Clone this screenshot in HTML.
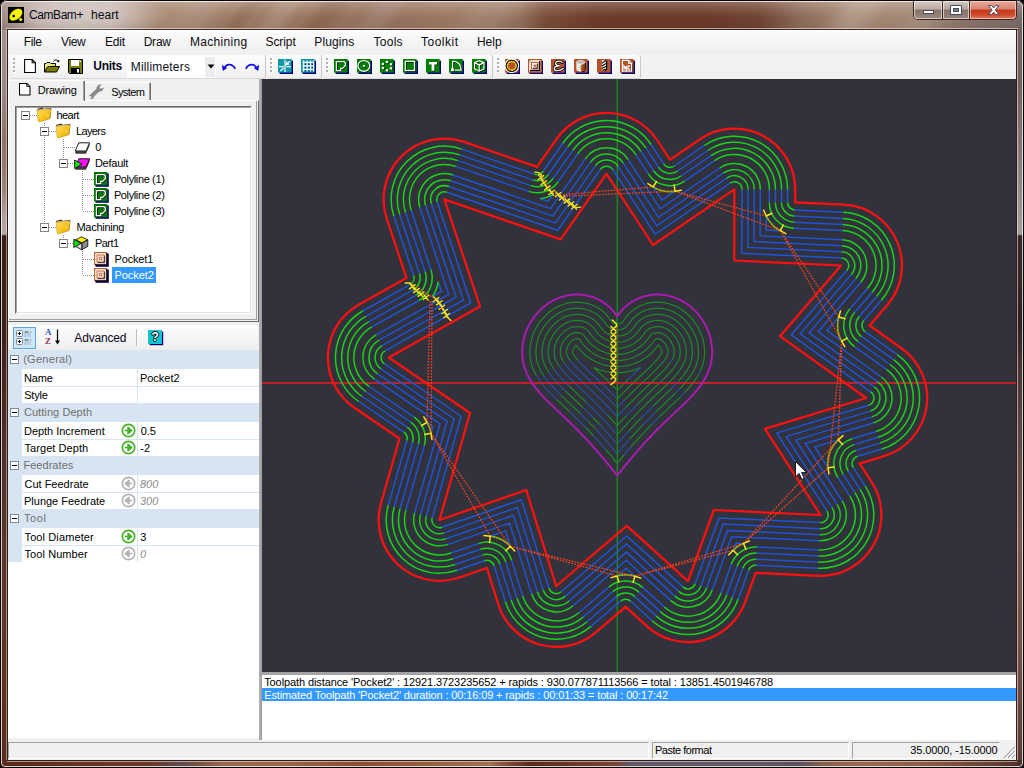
<!DOCTYPE html>
<html lang="en"><head><meta charset="utf-8"><title>CamBam+ heart</title><style>
html,body{margin:0;padding:0}
body{width:1024px;height:768px;overflow:hidden;position:relative;background:#000;font-family:"Liberation Sans",sans-serif;font-size:11px}
div,span,svg{position:absolute;box-sizing:border-box}
.t{white-space:pre;display:block}
#win{left:0;top:0;width:1024px;height:768px;border-radius:7px 7px 5px 5px;overflow:hidden;background:#6a4a40}
#client{left:8px;top:30px;width:1008px;height:730px;background:#f0f0f0}
</style></head><body><div id="win">
<div style="left:0;top:0;width:1024px;height:30px;background:linear-gradient(90deg,#978079 0,#a08a83 12px,#b5a29b 40px,#b9a69e 110px,#a68671 160px,#9d7b66 230px,#9b7762 300px,#946f5c 380px,#9c7863 450px,#93705c 520px,#7a4c3a 545px,#6c3a2a 600px,#6a3828 700px,#704334 760px,#8c6a58 800px,#a58672 850px,#a08674 925px,#8a746a 965px,#7a6a66 1024px)"></div>
<div style="left:165px;top:0;width:60px;height:30px;transform:skewX(-38deg);background:linear-gradient(90deg,rgba(0,0,0,0),rgba(255,255,255,.08) 35%,rgba(255,255,255,.08) 65%,rgba(0,0,0,0))"></div>
<div style="left:230px;top:0;width:26px;height:30px;transform:skewX(-38deg);background:linear-gradient(90deg,rgba(0,0,0,0),rgba(70,25,5,.10) 35%,rgba(70,25,5,.10) 65%,rgba(0,0,0,0))"></div>
<div style="left:262px;top:0;width:36px;height:30px;transform:skewX(-38deg);background:linear-gradient(90deg,rgba(0,0,0,0),rgba(255,255,255,.11) 35%,rgba(255,255,255,.11) 65%,rgba(0,0,0,0))"></div>
<div style="left:306px;top:0;width:40px;height:30px;transform:skewX(-38deg);background:linear-gradient(90deg,rgba(0,0,0,0),rgba(70,25,5,.13) 35%,rgba(70,25,5,.13) 65%,rgba(0,0,0,0))"></div>
<div style="left:360px;top:0;width:42px;height:30px;transform:skewX(-38deg);background:linear-gradient(90deg,rgba(0,0,0,0),rgba(255,255,255,.09) 35%,rgba(255,255,255,.09) 65%,rgba(0,0,0,0))"></div>
<div style="left:455px;top:0;width:67px;height:30px;transform:skewX(-38deg);background:linear-gradient(90deg,rgba(0,0,0,0),rgba(255,255,255,.09) 35%,rgba(255,255,255,.09) 65%,rgba(0,0,0,0))"></div>
<div style="left:828px;top:0;width:56px;height:30px;transform:skewX(-38deg);background:linear-gradient(90deg,rgba(0,0,0,0),rgba(255,255,255,.12) 35%,rgba(255,255,255,.12) 65%,rgba(0,0,0,0))"></div>
<div style="left:905px;top:0;width:45px;height:30px;transform:skewX(-38deg);background:linear-gradient(90deg,rgba(0,0,0,0),rgba(255,255,255,.06) 35%,rgba(255,255,255,.06) 65%,rgba(0,0,0,0))"></div>
<div style="left:0;top:0;width:1024px;height:30px;background:linear-gradient(180deg,rgba(255,255,255,.28) 0,rgba(255,255,255,.10) 10px,rgba(0,0,0,0) 18px,rgba(0,0,0,.06) 30px)"></div>
<div style="left:0;top:30px;width:8px;height:738px;background:linear-gradient(180deg,#a09490 0,#998985 60px,#8e7068 110px,#9a857e 160px,#b3a39f 190px,#b5a6a2 204px,#3c1e18 206px,#3e2018 300px,#4a281e 370px,#54302a 440px,#5a3428 506px,#5e3426 600px,#5c2a1a 738px)"></div>
<div style="left:6px;top:30px;width:1px;height:731px;background:rgba(255,235,228,.5)"></div>
<div style="left:1016px;top:30px;width:8px;height:738px;background:linear-gradient(180deg,#6e6260 0,#70635f 50px,#857a78 120px,#9c9492 180px,#a49c9a 204px,#3a2828 206px,#382826 250px,#2e2020 292px,#4a3634 340px,#5a4440 390px,#6a5048 450px,#7a5a50 506px,#755449 600px,#6a4840 670px,#5a3a30 738px)"></div>
<div style="left:1017px;top:30px;width:1px;height:731px;background:rgba(255,240,236,.55)"></div>
<div style="left:0;top:760px;width:1024px;height:8px;background:linear-gradient(90deg,#5a2a1c 0,#5c2c1e 40px,#6a3424 90px,#6c3828 150px,#5e4a4e 180px,#7a5244 200px,#9a6a50 225px,#9a6448 290px,#8a4c30 360px,#96603f 430px,#a07050 490px,#7a4434 512px,#5a2a1e 530px,#6a3628 570px,#7a4434 615px,#5e5868 632px,#5e5868 765px,#5a5060 800px,#8a604c 825px,#9a6a50 860px,#8a5a44 930px,#6a4034 990px,#4a2c26 1024px)"></div>
<div style="left:7px;top:761px;width:1010px;height:1px;background:rgba(255,235,228,.55)"></div>
<div style="left:7px;top:29px;width:1010px;height:732px;border:1px solid #2c1c1a;border-top-color:#3a2a28"></div>
<div style="left:6px;top:28px;width:1012px;height:1px;background:rgba(255,245,240,.55)"></div>
<div style="left:0;top:0;width:1024px;height:768px;border:1px solid #0a0606;border-radius:7px 7px 5px 5px"></div>
<div style="left:1px;top:1px;width:1022px;height:766px;border:1px solid rgba(255,250,248,.78);border-radius:6px 6px 4px 4px"></div>
<div style="left:-10px;top:-6px;width:200px;height:44px;background:radial-gradient(ellipse 46% 50% at 46% 50%,rgba(255,255,255,.38) 0,rgba(255,255,255,.28) 45%,rgba(255,255,255,0) 100%)"></div>
<svg style="left:8px;top:7px" width="16" height="16" viewBox="0 0 16 16"><rect width="16" height="16" fill="#040404"/><ellipse cx="7.9" cy="7.7" rx="7.4" ry="4.7" transform="rotate(-40 7.9 7.7)" fill="#f4f208"/><circle cx="5.7" cy="9" r="1.35" fill="#040404"/><path d="M12.5 10.6L14.6 12.5L12.6 14.6L10.8 12.6Z" fill="#f4f208"/></svg>
<span id="title1" class="t " style="left:29.07px;top:8px;font-size:12px;line-height:14px;color:#0a0a14;letter-spacing:-0.444px;">CamBam+</span>
<span id="title2" class="t " style="left:91.11px;top:8px;font-size:12px;line-height:14px;color:#0a0a14;letter-spacing:0.060px;">heart</span>
<div style="left:913px;top:0;width:104px;height:20px;border:1px solid #3a2622;border-top:none;border-radius:0 0 5px 5px;background:rgba(255,255,255,.05)"></div>
<div style="left:914px;top:1px;width:28px;height:18px;border-radius:0 0 0 4px;background:linear-gradient(180deg,#d9cec9 0,#b9a9a2 45%,#8a746a 50%,#9c887e 100%);box-shadow:inset 0 0 0 1px rgba(255,255,255,.55)"></div>
<div style="left:942px;top:1px;width:1px;height:18px;background:#3e2a26"></div>
<div style="left:943px;top:1px;width:26px;height:18px;background:linear-gradient(180deg,#d6cac5 0,#b5a59e 45%,#85706a 50%,#98857c 100%);box-shadow:inset 0 0 0 1px rgba(255,255,255,.55)"></div>
<div style="left:969px;top:1px;width:1px;height:18px;background:#3e2a26"></div>
<div style="left:970px;top:1px;width:46px;height:18px;border-radius:0 0 4px 0;background:linear-gradient(180deg,#e9aa9c 0,#d9826f 45%,#c5391c 50%,#cf4a2a 78%,#de8266 100%);box-shadow:inset 0 0 0 1px rgba(255,225,215,.6)"></div>
<svg style="left:914px;top:1px" width="102" height="18" viewBox="0 0 102 18"><rect x="9.5" y="9.5" width="10" height="3" fill="#fff" stroke="#454a5e" stroke-width="1"/><path d="M36.5 4.5h11v9h-11z" fill="#fff" stroke="#454a5e"/><rect x="39.5" y="7.5" width="5" height="3" fill="#8a7a78" stroke="#454a5e"/><path d="M74.6 4.6h3.2l1.9 2.3 1.9-2.3h3.2l-3.5 4.4 3.5 4.4h-3.2l-1.9-2.3-1.9 2.3h-3.2l3.5-4.4z" fill="#fff" stroke="#4a4e60" stroke-width="1" stroke-linejoin="round"/></svg>
<div id="client"></div>
<div style="left:8px;top:30px;width:1008px;height:24px;background:linear-gradient(180deg,#fdfdfd 0,#f5f5f5 45%,#efefef 100%)"></div>
<span id="m0" class="t " style="left:23.66px;top:35px;font-size:12px;line-height:14px;color:#0c0c10;letter-spacing:-0.344px;">File</span>
<span id="m1" class="t " style="left:61.0px;top:35px;font-size:12px;line-height:14px;color:#0c0c10;letter-spacing:-0.404px;">View</span>
<span id="m2" class="t " style="left:104.99px;top:35px;font-size:12px;line-height:14px;color:#0c0c10;letter-spacing:-0.163px;">Edit</span>
<span id="m3" class="t " style="left:143.66px;top:35px;font-size:12px;line-height:14px;color:#0c0c10;letter-spacing:-0.209px;">Draw</span>
<span id="m4" class="t " style="left:189.99px;top:35px;font-size:12px;line-height:14px;color:#0c0c10;letter-spacing:0.320px;">Machining</span>
<span id="m5" class="t " style="left:265.45px;top:35px;font-size:12px;line-height:14px;color:#0c0c10;letter-spacing:-0.062px;">Script</span>
<span id="m6" class="t " style="left:314.37px;top:35px;font-size:12px;line-height:14px;color:#0c0c10;letter-spacing:0.104px;">Plugins</span>
<span id="m7" class="t " style="left:373.62px;top:35px;font-size:12px;line-height:14px;color:#0c0c10;letter-spacing:0.248px;">Tools</span>
<span id="m8" class="t " style="left:421.0px;top:35px;font-size:12px;line-height:14px;color:#0c0c10;letter-spacing:0.500px;">Toolkit</span>
<span id="m9" class="t " style="left:476.99px;top:35px;font-size:12px;line-height:14px;color:#0c0c10;letter-spacing:-0.038px;">Help</span>
<div style="left:8px;top:54px;width:1008px;height:25px;background:linear-gradient(180deg,#f3f3f3 0,#f0f0f0 100%)"></div>
<div style="left:10px;top:55px;width:256px;height:24px;border-radius:3px;background:linear-gradient(180deg,#fcfcfc 0,#f8f8f8 45%,#efefef 100%);border-right:1px solid #c9c9c9;border-bottom:1px solid #d8d8d8"></div>
<div style="left:267px;top:55px;width:55px;height:24px;border-radius:3px;background:linear-gradient(180deg,#fcfcfc 0,#f8f8f8 45%,#efefef 100%);border-right:1px solid #c9c9c9;border-bottom:1px solid #d8d8d8"></div>
<div style="left:323px;top:55px;width:170px;height:24px;border-radius:3px;background:linear-gradient(180deg,#fcfcfc 0,#f8f8f8 45%,#efefef 100%);border-right:1px solid #c9c9c9;border-bottom:1px solid #d8d8d8"></div>
<div style="left:494px;top:55px;width:147px;height:24px;border-radius:3px;background:linear-gradient(180deg,#fcfcfc 0,#f8f8f8 45%,#efefef 100%);border-right:1px solid #c9c9c9;border-bottom:1px solid #d8d8d8"></div>
<svg style="left:13px;top:58px" width="4" height="16" viewBox="0 0 4 16"><rect x="1" y="1" width="2" height="2" fill="#fff"/><rect x="0" y="0" width="2" height="2" fill="#adadba"/><rect x="1" y="5" width="2" height="2" fill="#fff"/><rect x="0" y="4" width="2" height="2" fill="#adadba"/><rect x="1" y="9" width="2" height="2" fill="#fff"/><rect x="0" y="8" width="2" height="2" fill="#adadba"/><rect x="1" y="13" width="2" height="2" fill="#fff"/><rect x="0" y="12" width="2" height="2" fill="#adadba"/></svg>
<svg style="left:270px;top:58px" width="4" height="16" viewBox="0 0 4 16"><rect x="1" y="1" width="2" height="2" fill="#fff"/><rect x="0" y="0" width="2" height="2" fill="#adadba"/><rect x="1" y="5" width="2" height="2" fill="#fff"/><rect x="0" y="4" width="2" height="2" fill="#adadba"/><rect x="1" y="9" width="2" height="2" fill="#fff"/><rect x="0" y="8" width="2" height="2" fill="#adadba"/><rect x="1" y="13" width="2" height="2" fill="#fff"/><rect x="0" y="12" width="2" height="2" fill="#adadba"/></svg>
<svg style="left:326px;top:58px" width="4" height="16" viewBox="0 0 4 16"><rect x="1" y="1" width="2" height="2" fill="#fff"/><rect x="0" y="0" width="2" height="2" fill="#adadba"/><rect x="1" y="5" width="2" height="2" fill="#fff"/><rect x="0" y="4" width="2" height="2" fill="#adadba"/><rect x="1" y="9" width="2" height="2" fill="#fff"/><rect x="0" y="8" width="2" height="2" fill="#adadba"/><rect x="1" y="13" width="2" height="2" fill="#fff"/><rect x="0" y="12" width="2" height="2" fill="#adadba"/></svg>
<svg style="left:497px;top:58px" width="4" height="16" viewBox="0 0 4 16"><rect x="1" y="1" width="2" height="2" fill="#fff"/><rect x="0" y="0" width="2" height="2" fill="#adadba"/><rect x="1" y="5" width="2" height="2" fill="#fff"/><rect x="0" y="4" width="2" height="2" fill="#adadba"/><rect x="1" y="9" width="2" height="2" fill="#fff"/><rect x="0" y="8" width="2" height="2" fill="#adadba"/><rect x="1" y="13" width="2" height="2" fill="#fff"/><rect x="0" y="12" width="2" height="2" fill="#adadba"/></svg>
<svg style="left:24px;top:59px" width="12" height="14" viewBox="0 0 11 13"><path d="M.5.5H7.5L10.5 3.5V12.5H.5Z" fill="#fff" stroke="#000"/><path d="M7.5.5V3.5H10.5" fill="none" stroke="#000"/></svg>
<svg style="left:44px;top:58px" width="17" height="15" viewBox="0 0 17 15"><path d="M.5 14V5.5H2L3 4.5H6L7 5.5H11.5V8.5" fill="#e8e060" stroke="#000"/><path d="M.5 14L3.5 8.5H15.5L12.5 14Z" fill="#7c7c00" stroke="#000" stroke-linejoin="round"/><path d="M9.5 3.5C10.5 1.3 13.3 1.3 14.4 3.6" fill="none" stroke="#000"/><path d="M12.6 3.2L15 4.6L15.3 1.8Z" fill="#000"/><path d="M2 7h1M4 7h1M6 7h1M3 8h1M5 8h1M2 9h1M3 10h0" stroke="#fff" stroke-width="1" opacity=".75"/></svg>
<svg style="left:68px;top:59px" width="15" height="15" viewBox="0 0 15 15"><path d="M.5.5H14.5V14.5H1.5L.5 13.5Z" fill="#7c7c00" stroke="#000"/><rect x="3" y="1" width="8" height="6" fill="#fff"/><rect x="11.5" y="1.5" width="1.4" height="1.6" fill="#fff"/><rect x="3" y="9" width="9" height="5.5" fill="#000"/><rect x="9" y="10" width="2" height="3.6" fill="#fff"/></svg>
<span id="units" class="t " style="left:93.29px;top:58.599999999999994px;font-size:12px;line-height:14px;color:#08081c;font-weight:bold;letter-spacing:-0.277px;">Units</span>
<div style="left:127px;top:56px;width:89px;height:22px;background:#fff"></div>
<div style="left:205px;top:57px;width:10px;height:20px;background:#ececec"></div>
<svg style="left:207px;top:64px" width="8" height="5" viewBox="0 0 8 5"><path d="M.5.5H7.5L4 4.5Z" fill="#000"/></svg>
<span id="mm" class="t " style="left:130.72px;top:60.400000000000006px;font-size:12px;line-height:14px;color:#101018;letter-spacing:0.185px;">Millimeters</span>
<svg style="left:221px;top:60px" width="16" height="13" viewBox="0 0 16 13"><path d="M3.4 8.4C5 3.6 11.2 3 14.2 8.8" fill="none" stroke="#1010e4" stroke-width="1.7"/><path d="M.8 5L6.2 8L1.8 11Z" fill="#1010e4"/></svg>
<svg style="left:244px;top:60px" width="16" height="13" viewBox="0 0 16 13"><path d="M12.6 8.4C11 3.6 4.8 3 1.8 8.8" fill="none" stroke="#1010e4" stroke-width="1.7"/><path d="M15.2 5L9.8 8L14.2 11Z" fill="#1010e4"/></svg>
<svg style="left:278px;top:59px" width="16" height="16" viewBox="0 0 16 16"><rect x="1.6" y="1.6" width="13.4" height="13.4" fill="#00007c"/><rect x="0" y="0" width="13.6" height="13.6" fill="#0e98aa"/><path d="M1 7.6H5.6M8.4 7.6H13M7 .8V13M2.4 12L5.6 8.8M8.2 5.8L12 2M9 2.6L8.2 5.8L11.4 5" stroke="#fff" stroke-width="1.15" fill="none"/></svg>
<svg style="left:301px;top:59px" width="16" height="16" viewBox="0 0 16 16"><rect x="1.6" y="1.6" width="13.4" height="13.4" fill="#00007c"/><rect x="0" y="0" width="13.6" height="13.6" fill="#0e98aa"/><path d="M4.2 4.8h1.4v1.4h-1.4zM7.6 4.8h1.4v1.4h-1.4zM11 4.8h1.4v1.4h-1.4zM4.2 8.2h1.4v1.4h-1.4zM7.6 8.2h1.4v1.4h-1.4zM11 8.2h1.4v1.4h-1.4zM4.2 11.4h1.4v1.2h-1.4zM7.6 11.4h1.4v1.2h-1.4z" fill="#00007c"/><path d="M1.4 3.4H12.8M1.4 6.9H12.8M1.4 10.4H12.8M2.6 1.4V12.6M6 1.4V12.6M9.4 1.4V12.6M12.6 1.4V12.6" stroke="#fff" stroke-width="1.15" fill="none"/></svg>
<svg style="left:334px;top:59px" width="16" height="16" viewBox="0 0 16 16"><rect x="1.6" y="1.6" width="13.4" height="13.4" fill="#00007c"/><rect x="0" y="0" width="13.6" height="13.6" fill="#008000"/><path d="M3 3.2H9.8Q11.8 3.4 11.8 5.4V6.8L9 9.8H7.4V12H3Z" fill="none" stroke="#000" stroke-width="1.2"/><path d="M2.4 2.6H9.4Q11.4 2.8 11.4 5V6.4L8.6 9.4H6.8V11.6H2.4Z" fill="none" stroke="#fff" stroke-width="1.25"/></svg>
<svg style="left:357px;top:59px" width="16" height="16" viewBox="0 0 16 16"><rect x="1.6" y="1.6" width="13.4" height="13.4" fill="#00007c"/><rect x="0" y="0" width="13.6" height="13.6" fill="#008000"/><ellipse cx="7.4" cy="7.4" rx="5.9" ry="5.4" fill="none" stroke="#000" stroke-width="1.2"/><ellipse cx="6.9" cy="6.9" rx="5.9" ry="5.4" fill="none" stroke="#fff" stroke-width="1.25"/><rect x="6.4" y="6.4" width="2.4" height="1.8" fill="#000"/><rect x="5.8" y="6" width="2.4" height="1.7" fill="#fff"/></svg>
<svg style="left:380px;top:59px" width="16" height="16" viewBox="0 0 16 16"><rect x="1.6" y="1.6" width="13.4" height="13.4" fill="#00007c"/><rect x="0" y="0" width="13.6" height="13.6" fill="#008000"/><rect x="6.5" y="2.5" width="2.3" height="2.3" fill="#001800"/><rect x="2.5" y="4.5" width="2.3" height="2.3" fill="#001800"/><rect x="10.5" y="4.9" width="2.3" height="2.3" fill="#001800"/><rect x="2.5" y="8.5" width="2.3" height="2.3" fill="#001800"/><rect x="10.5" y="8.899999999999999" width="2.3" height="2.3" fill="#001800"/><rect x="6.5" y="10.899999999999999" width="2.3" height="2.3" fill="#001800"/><rect x="5.8" y="1.8" width="2.3" height="2.3" fill="#fff"/><rect x="1.8" y="3.8" width="2.3" height="2.3" fill="#fff"/><rect x="9.8" y="4.2" width="2.3" height="2.3" fill="#fff"/><rect x="1.8" y="7.8" width="2.3" height="2.3" fill="#fff"/><rect x="9.8" y="8.2" width="2.3" height="2.3" fill="#fff"/><rect x="5.8" y="10.2" width="2.3" height="2.3" fill="#fff"/></svg>
<svg style="left:403px;top:59px" width="16" height="16" viewBox="0 0 16 16"><rect x="1.6" y="1.6" width="13.4" height="13.4" fill="#00007c"/><rect x="0" y="0" width="13.6" height="13.6" fill="#008000"/><rect x="3" y="3" width="9.2" height="9.2" fill="none" stroke="#000" stroke-width="1.2"/><rect x="2.3" y="2.3" width="9.2" height="9.2" fill="none" stroke="#fff" stroke-width="1.3"/></svg>
<svg style="left:426px;top:59px" width="16" height="16" viewBox="0 0 16 16"><rect x="1.6" y="1.6" width="13.4" height="13.4" fill="#00007c"/><rect x="0" y="0" width="13.6" height="13.6" fill="#008000"/><path d="M3.6 3.6H11.6V6.2H9V12.4H6.2V6.2H3.6Z" fill="#001c00"/><path d="M3 3H11V5.6H8.4V11.8H5.6V5.6H3Z" fill="#fff"/></svg>
<svg style="left:449px;top:59px" width="16" height="16" viewBox="0 0 16 16"><rect x="1.6" y="1.6" width="13.4" height="13.4" fill="#00007c"/><rect x="0" y="0" width="13.6" height="13.6" fill="#008000"/><path d="M4.2 3H6.4Q12.4 4.4 12.8 11.6H4.2Z" fill="none" stroke="#000" stroke-width="1.2"/><path d="M3.6 2.4H5.8Q11.8 3.8 12.2 11H3.6Z" fill="none" stroke="#fff" stroke-width="1.25"/><rect x="2.6" y="10" width="2.8" height="2.8" fill="#000"/><rect x="2" y="9.4" width="2.8" height="2.8" fill="#fff"/></svg>
<svg style="left:472px;top:59px" width="16" height="16" viewBox="0 0 16 16"><rect x="1.6" y="1.6" width="13.4" height="13.4" fill="#00007c"/><rect x="0" y="0" width="13.6" height="13.6" fill="#008000"/><g fill="none" stroke="#000" stroke-width="1.2" transform="translate(.7 .7)"><path d="M7.2 1.6L12 3.6V9.8L7.2 12.2L2.6 9.8V3.6Z"/><path d="M2.6 3.6L7.2 6L12 3.6M7.2 6V12.2"/></g><g fill="none" stroke="#fff" stroke-width="1.2"><path d="M7.2 1.6L12 3.6V9.8L7.2 12.2L2.6 9.8V3.6Z"/><path d="M2.6 3.6L7.2 6L12 3.6M7.2 6V12.2"/></g></svg>
<svg style="left:505px;top:59px" width="16" height="16" viewBox="0 0 16 16"><rect x="1.6" y="1.6" width="13.4" height="13.4" fill="#00007c"/><rect x="0" y="0" width="13.6" height="13.6" fill="#b5522a"/><circle cx="6.8" cy="6.8" r="6.7" fill="none" stroke="#fff" stroke-width="1.3"/><circle cx="6.8" cy="6.8" r="5.5" fill="none" stroke="#000" stroke-width="1.3"/><circle cx="6.8" cy="6.8" r="4.4" fill="none" stroke="#f4e800" stroke-width="1.4" stroke-dasharray="2.2 .5"/></svg>
<svg style="left:528px;top:59px" width="16" height="16" viewBox="0 0 16 16"><rect x="1.6" y="1.6" width="13.4" height="13.4" fill="#00007c"/><rect x="0" y="0" width="13.6" height="13.6" fill="#b5522a"/><rect x=".6" y=".6" width="12.4" height="12.4" fill="#fff" stroke="#b5522a" stroke-width="1.2"/><path d="M11.6 2V11.6H2" fill="none" stroke="#000" stroke-width="1.1"/><rect x="3.4" y="3.4" width="6.6" height="6.6" fill="none" stroke="#b5522a" stroke-width="1.1"/><path d="M9.2 5V9.2H5" fill="none" stroke="#000" stroke-width=".9"/><rect x="5.6" y="5.6" width="2.2" height="2.2" fill="#b5522a"/><rect x="1.4" y="1.4" width="1.4" height="1.4" fill="#6a9a20"/></svg>
<svg style="left:551px;top:59px" width="16" height="16" viewBox="0 0 16 16"><rect x="1.6" y="1.6" width="13.4" height="13.4" fill="#00007c"/><rect x="0" y="0" width="13.6" height="13.6" fill="#b5522a"/><path d="M11.2 3.4C9.4 1.6 5 1.8 4.6 4.2C4.4 5.8 6 6.8 8.8 6.9C5.2 6.7 3 8 3.2 9.8C3.6 12.2 8.4 12.4 12.2 9.4" fill="none" stroke="#000" stroke-width="2.9" stroke-linecap="round"/><path d="M11.2 3.4C9.4 1.6 5 1.8 4.6 4.2C4.4 5.8 6 6.8 8.8 6.9C5.2 6.7 3 8 3.2 9.8C3.6 12.2 8.4 12.4 12.2 9.4" fill="none" stroke="#fff" stroke-width="1.3" stroke-linecap="round"/></svg>
<svg style="left:574px;top:59px" width="16" height="16" viewBox="0 0 16 16"><rect x="1.6" y="1.6" width="13.4" height="13.4" fill="#00007c"/><rect x="0" y="0" width="13.6" height="13.6" fill="#b5522a"/><path d="M2.4 3.6V10.6C2.4 13 10.8 13 10.8 10.6V3.6Z" fill="#fff"/><path d="M7.2 4V12.4C9.6 12.2 10.8 11.6 10.8 10.6V3.6Z" fill="#a8401f"/><path d="M11.2 4V10.8C11 12 9.6 12.8 7.6 12.9" fill="none" stroke="#000" stroke-width="1"/><ellipse cx="6.6" cy="3.4" rx="4.2" ry="1.8" fill="#b4b4b4" stroke="#fff" stroke-width=".7"/><path d="M2.8 6.4H6.6M2.8 8.4H6.6M2.8 10.4H6.6" stroke="#c8c8c8" stroke-width=".8"/><rect x="6" y="7" width="1.3" height="1.3" fill="#a0c020"/><rect x="6" y="9" width="1.3" height="1.3" fill="#a0c020"/></svg>
<svg style="left:597px;top:59px" width="16" height="16" viewBox="0 0 16 16"><rect x="1.6" y="1.6" width="13.4" height="13.4" fill="#00007c"/><rect x="0" y="0" width="13.6" height="13.6" fill="#b5522a"/><path d="M5.6 1.6H10.2V10L8.2 13L5.6 10Z" fill="#000"/><path d="M4.8 1.2H9V9.6L6.9 12.6L4.8 9.6Z" fill="#fff"/><path d="M4.8 4.2L9 1.6M4.8 7L9 4.4M4.8 9.6L9 7.2M6 11.4L8.6 9.8" stroke="#000" stroke-width="1.15"/></svg>
<svg style="left:620px;top:59px" width="16" height="16" viewBox="0 0 16 16"><rect x="1.6" y="1.6" width="13.4" height="13.4" fill="#00007c"/><rect x="0" y="0" width="13.6" height="13.6" fill="#b5522a"/><path d="M3.4 2.2H9.6L12.6 5.2V13H3.4Z" fill="#000"/><path d="M2.4 1.4H8.6L11.6 4.4V12.2H2.4Z" fill="#b5522a" stroke="#fff" stroke-width="1.2"/><path d="M8.6 1.4V4.4H11.6" fill="none" stroke="#fff" stroke-width="1"/><path d="M4 10.6V6.8L6.3 10.6V6.8M10 7.2H8V10.2H10" fill="none" stroke="#fff" stroke-width="1.2"/><rect x="10.2" y="2" width="1.2" height="1.2" fill="#6a9a20"/></svg>
<div style="left:8px;top:79px;width:251px;height:663px;background:#f0f0f0"></div>
<div style="left:8px;top:100px;width:251px;height:222px;background:#f0f0f0;border-top:1px solid #fff;border-left:1px solid #fff;border-right:1px solid #696969;border-bottom:1px solid #696969"></div>
<div style="left:9px;top:101px;width:248px;height:219px;border-right:1px solid #a0a0a0;border-bottom:1px solid #a0a0a0"></div>
<div style="left:8px;top:80px;width:77px;height:21px;background:#f0f0f0;border-top:1px solid #fff;border-left:1px solid #fff;border-right:1px solid #696969;border-radius:2px 2px 0 0"></div>
<div style="left:83px;top:81px;width:1px;height:19px;background:#a0a0a0"></div>
<div style="left:85px;top:82px;width:66px;height:18px;background:#f0f0f0;border-top:1px solid #fff;border-right:1px solid #696969;border-radius:0 2px 0 0"></div>
<div style="left:149px;top:83px;width:1px;height:17px;background:#a0a0a0"></div>
<svg style="left:19px;top:83px" width="11.5" height="12.5" viewBox="0 0 11 13" preserveAspectRatio="none"><path d="M.5.5H7.5L10.5 3.5V12.5H.5Z" fill="#fff" stroke="#000"/><path d="M7.5.5V3.5H10.5" fill="none" stroke="#000"/></svg>
<svg style="left:88px;top:84px" width="17" height="15" viewBox="0 0 17 15"><path d="M3.4 12.4L10.6 5.4" stroke="#878787" stroke-width="3.9" stroke-linecap="butt"/><path d="M10.6 7.4A3.8 3.8 0 0 1 9 2.6A3.9 3.9 0 0 1 13.6 .6L11.4 3L12.8 4.8L15.6 3.4A3.9 3.9 0 0 1 10.6 7.4Z" fill="#8a8a8a"/><path d="M4.4 10.2A2.9 2.9 0 0 1 5.8 13.6A2.9 2.9 0 0 1 2.2 14.8L3.8 13.2L2.8 11.8L.8 12.8A2.9 2.9 0 0 1 4.4 10.2Z" fill="#8a8a8a"/></svg>
<span id="tabd" class="t " style="left:37.84px;top:83.8px;font-size:11px;line-height:13px;color:#000;letter-spacing:-0.237px;">Drawing</span>
<span id="tabs" class="t " style="left:111.13px;top:85.8px;font-size:11px;line-height:13px;color:#000;letter-spacing:-0.582px;">System</span>
<div style="left:15px;top:106px;width:237px;height:208px;background:#fff;border-top:1px solid #696969;border-left:1px solid #696969;border-right:1px solid #fff;border-bottom:1px solid #fff"></div>
<div style="left:16px;top:107px;width:235px;height:206px;border-top:1px solid #a0a0a0;border-left:1px solid #a0a0a0;border-right:1px solid #e3e3e3;border-bottom:1px solid #e3e3e3"></div>
<div style="left:30px;top:115px;width:7px;height:1px;background:repeating-linear-gradient(90deg,#8a8a8a 0 1px,transparent 1px 2px)"></div>
<div style="left:44px;top:123px;width:1px;height:104px;background:repeating-linear-gradient(180deg,#8a8a8a 0 1px,transparent 1px 2px)"></div>
<div style="left:49px;top:131px;width:7px;height:1px;background:repeating-linear-gradient(90deg,#8a8a8a 0 1px,transparent 1px 2px)"></div>
<div style="left:63px;top:139px;width:1px;height:24px;background:repeating-linear-gradient(180deg,#8a8a8a 0 1px,transparent 1px 2px)"></div>
<div style="left:64px;top:147px;width:11px;height:1px;background:repeating-linear-gradient(90deg,#8a8a8a 0 1px,transparent 1px 2px)"></div>
<div style="left:68px;top:163px;width:7px;height:1px;background:repeating-linear-gradient(90deg,#8a8a8a 0 1px,transparent 1px 2px)"></div>
<div style="left:82px;top:171px;width:1px;height:40px;background:repeating-linear-gradient(180deg,#8a8a8a 0 1px,transparent 1px 2px)"></div>
<div style="left:83px;top:179px;width:11px;height:1px;background:repeating-linear-gradient(90deg,#8a8a8a 0 1px,transparent 1px 2px)"></div>
<div style="left:83px;top:195px;width:11px;height:1px;background:repeating-linear-gradient(90deg,#8a8a8a 0 1px,transparent 1px 2px)"></div>
<div style="left:83px;top:211px;width:11px;height:1px;background:repeating-linear-gradient(90deg,#8a8a8a 0 1px,transparent 1px 2px)"></div>
<div style="left:49px;top:227px;width:7px;height:1px;background:repeating-linear-gradient(90deg,#8a8a8a 0 1px,transparent 1px 2px)"></div>
<div style="left:63px;top:235px;width:1px;height:8px;background:repeating-linear-gradient(180deg,#8a8a8a 0 1px,transparent 1px 2px)"></div>
<div style="left:68px;top:243px;width:7px;height:1px;background:repeating-linear-gradient(90deg,#8a8a8a 0 1px,transparent 1px 2px)"></div>
<div style="left:82px;top:251px;width:1px;height:24px;background:repeating-linear-gradient(180deg,#8a8a8a 0 1px,transparent 1px 2px)"></div>
<div style="left:83px;top:259px;width:11px;height:1px;background:repeating-linear-gradient(90deg,#8a8a8a 0 1px,transparent 1px 2px)"></div>
<div style="left:83px;top:275px;width:11px;height:1px;background:repeating-linear-gradient(90deg,#8a8a8a 0 1px,transparent 1px 2px)"></div>
<svg style="left:21.0px;top:111.0px" width="9" height="9" viewBox="0 0 9 9"><rect x=".5" y=".5" width="8" height="8" fill="#fff" stroke="#848484"/><path d="M2 4.5H7" stroke="#000"/></svg>
<svg style="left:40.0px;top:127.0px" width="9" height="9" viewBox="0 0 9 9"><rect x=".5" y=".5" width="8" height="8" fill="#fff" stroke="#848484"/><path d="M2 4.5H7" stroke="#000"/></svg>
<svg style="left:59.0px;top:159.0px" width="9" height="9" viewBox="0 0 9 9"><rect x=".5" y=".5" width="8" height="8" fill="#fff" stroke="#848484"/><path d="M2 4.5H7" stroke="#000"/></svg>
<svg style="left:40.0px;top:223.0px" width="9" height="9" viewBox="0 0 9 9"><rect x=".5" y=".5" width="8" height="8" fill="#fff" stroke="#848484"/><path d="M2 4.5H7" stroke="#000"/></svg>
<svg style="left:59.0px;top:239.0px" width="9" height="9" viewBox="0 0 9 9"><rect x=".5" y=".5" width="8" height="8" fill="#fff" stroke="#848484"/><path d="M2 4.5H7" stroke="#000"/></svg>
<svg style="left:36px;top:107px" width="17" height="16" viewBox="0 0 17 16"><defs><linearGradient id="fg36107" x1="0" y1="0" x2="1" y2="1"><stop offset="0" stop-color="#ffe066"/><stop offset=".55" stop-color="#f7c21c"/><stop offset="1" stop-color="#e0a208"/></linearGradient></defs><path d="M1.2 1.8L6.4 .6L7.6 1.8L15.4 .8L14.2 11.6L3.4 14.6Z" fill="#4a3a18"/><path d="M2.2 2.6L14.6 1.6L13.6 10.8L3.6 13.4Z" fill="#e8e0c8"/><path d="M1 3.4L13.8 2.4Q15.2 2.4 15 3.8L13.8 11.8L3.2 15Q2.4 15.2 2.2 14.2Z" fill="url(#fg36107)" stroke="#c89410" stroke-width=".5"/><path d="M11.2 8.2l1.2-.3-.2 1.2-1.2.3z" fill="#fff6c0"/></svg>
<svg style="left:55px;top:123px" width="17" height="16" viewBox="0 0 17 16"><defs><linearGradient id="fg55123" x1="0" y1="0" x2="1" y2="1"><stop offset="0" stop-color="#ffe066"/><stop offset=".55" stop-color="#f7c21c"/><stop offset="1" stop-color="#e0a208"/></linearGradient></defs><path d="M1.2 1.8L6.4 .6L7.6 1.8L15.4 .8L14.2 11.6L3.4 14.6Z" fill="#4a3a18"/><path d="M2.2 2.6L14.6 1.6L13.6 10.8L3.6 13.4Z" fill="#e8e0c8"/><path d="M1 3.4L13.8 2.4Q15.2 2.4 15 3.8L13.8 11.8L3.2 15Q2.4 15.2 2.2 14.2Z" fill="url(#fg55123)" stroke="#c89410" stroke-width=".5"/><path d="M11.2 8.2l1.2-.3-.2 1.2-1.2.3z" fill="#fff6c0"/></svg>
<svg style="left:55px;top:219px" width="17" height="16" viewBox="0 0 17 16"><defs><linearGradient id="fg55219" x1="0" y1="0" x2="1" y2="1"><stop offset="0" stop-color="#ffe066"/><stop offset=".55" stop-color="#f7c21c"/><stop offset="1" stop-color="#e0a208"/></linearGradient></defs><path d="M1.2 1.8L6.4 .6L7.6 1.8L15.4 .8L14.2 11.6L3.4 14.6Z" fill="#4a3a18"/><path d="M2.2 2.6L14.6 1.6L13.6 10.8L3.6 13.4Z" fill="#e8e0c8"/><path d="M1 3.4L13.8 2.4Q15.2 2.4 15 3.8L13.8 11.8L3.2 15Q2.4 15.2 2.2 14.2Z" fill="url(#fg55219)" stroke="#c89410" stroke-width=".5"/><path d="M11.2 8.2l1.2-.3-.2 1.2-1.2.3z" fill="#fff6c0"/></svg>
<svg style="left:74px;top:141.5px" width="17" height="13" viewBox="0 0 17 13"><path d="M1.4 9.2L12 9.2L15.6 1.2V3.6L12 11.8H1.4Z" fill="#3a3a3a"/><path d="M4.8.8H15.6L12 9H1.2Z" fill="#fff" stroke="#000" stroke-width=".9"/></svg>
<svg style="left:74px;top:157.5px" width="17" height="13" viewBox="0 0 17 13"><path d="M1.4 9.2L12 9.2L15.6 1.2V3.6L12 11.8H1.4Z" fill="#3a3a3a"/><path d="M4.8.8H15.6L12 9H1.2Z" fill="#ff10ff" stroke="#000" stroke-width=".9"/><path d="M.6 2L.6 10.6L8 6.2Z" fill="#10e010" stroke="#000" stroke-width=".8"/></svg>
<svg style="left:94px;top:172px" width="15" height="15" viewBox="0 0 15 15"><rect x="1.4" y="1.4" width="13.4" height="13.4" fill="#00007c"/><rect width="13.4" height="13.4" fill="#067406"/><path d="M3 3.2H9.8Q11.8 3.4 11.8 5.4V6.8L9 9.8H7.4V12H3Z" fill="none" stroke="#000" stroke-width="1.2"/><path d="M2.4 2.6H9.4Q11.4 2.8 11.4 5V6.4L8.6 9.4H6.8V11.6H2.4Z" fill="none" stroke="#fff" stroke-width="1.25"/></svg>
<svg style="left:94px;top:188px" width="15" height="15" viewBox="0 0 15 15"><rect x="1.4" y="1.4" width="13.4" height="13.4" fill="#00007c"/><rect width="13.4" height="13.4" fill="#067406"/><path d="M3 3.2H9.8Q11.8 3.4 11.8 5.4V6.8L9 9.8H7.4V12H3Z" fill="none" stroke="#000" stroke-width="1.2"/><path d="M2.4 2.6H9.4Q11.4 2.8 11.4 5V6.4L8.6 9.4H6.8V11.6H2.4Z" fill="none" stroke="#fff" stroke-width="1.25"/></svg>
<svg style="left:94px;top:204px" width="15" height="15" viewBox="0 0 15 15"><rect x="1.4" y="1.4" width="13.4" height="13.4" fill="#00007c"/><rect width="13.4" height="13.4" fill="#067406"/><path d="M3 3.2H9.8Q11.8 3.4 11.8 5.4V6.8L9 9.8H7.4V12H3Z" fill="none" stroke="#000" stroke-width="1.2"/><path d="M2.4 2.6H9.4Q11.4 2.8 11.4 5V6.4L8.6 9.4H6.8V11.6H2.4Z" fill="none" stroke="#fff" stroke-width="1.25"/></svg>
<svg style="left:73px;top:236px" width="17" height="15" viewBox="0 0 17 15"><path d="M2.6 4L8.4 .8L14.8 3.8L8.8 7Z" fill="#f4ee10" stroke="#000" stroke-width=".8"/><path d="M8.8 7L14.8 3.8V10.4L8.8 13.8Z" fill="#8c8c8c" stroke="#000" stroke-width=".8"/><path d="M2.6 4L8.8 7V13.8L2.6 10.4Z" fill="#d8d8d8" stroke="#000" stroke-width=".8"/><path d="M.8 3.2V11.6L8 7.4Z" fill="#10e010" stroke="#000" stroke-width=".8"/></svg>
<svg style="left:94px;top:252px" width="15" height="15" viewBox="0 0 15 15"><rect x="1.6" y="1.6" width="13.2" height="13.2" fill="#00006c"/><rect width="13" height="13" fill="#fff"/><rect x=".6" y=".6" width="11.8" height="11.8" fill="none" stroke="#c2622c" stroke-width="1.2"/><rect x="3" y="3" width="7" height="7" fill="none" stroke="#c2622c" stroke-width="1"/><rect x="5.2" y="5.2" width="2.6" height="2.6" fill="#fff" stroke="#c2622c" stroke-width="1"/><path d="M12.9 1V12.9H1" fill="none" stroke="#000" stroke-width="1"/><path d="M10.6 3.6V10.6H3.6" fill="none" stroke="#000" stroke-width=".7"/></svg>
<svg style="left:94px;top:268px" width="15" height="15" viewBox="0 0 15 15"><rect x="1.6" y="1.6" width="13.2" height="13.2" fill="#00006c"/><rect width="13" height="13" fill="#fff"/><rect x=".6" y=".6" width="11.8" height="11.8" fill="none" stroke="#c2622c" stroke-width="1.2"/><rect x="3" y="3" width="7" height="7" fill="none" stroke="#c2622c" stroke-width="1"/><rect x="5.2" y="5.2" width="2.6" height="2.6" fill="#fff" stroke="#c2622c" stroke-width="1"/><path d="M12.9 1V12.9H1" fill="none" stroke="#000" stroke-width="1"/><path d="M10.6 3.6V10.6H3.6" fill="none" stroke="#000" stroke-width=".7"/></svg>
<div style="left:112px;top:267px;width:44px;height:16px;background:#3399ff"></div>
<span id="tr0" class="t " style="left:56.45px;top:108.7px;font-size:11px;line-height:13px;color:#000;letter-spacing:-0.527px;">heart</span>
<span id="tr1" class="t " style="left:75.97px;top:124.69999999999999px;font-size:11px;line-height:13px;color:#000;letter-spacing:-0.619px;">Layers</span>
<span id="tr2" class="t " style="left:95.29px;top:140.7px;font-size:11px;line-height:13px;color:#000;">0</span>
<span id="tr3" class="t " style="left:94.9px;top:156.7px;font-size:11px;line-height:13px;color:#000;letter-spacing:-0.234px;">Default</span>
<span id="tr4" class="t " style="left:113.9px;top:172.7px;font-size:11px;line-height:13px;color:#000;letter-spacing:-0.374px;">Polyline (1)</span>
<span id="tr5" class="t " style="left:113.9px;top:188.7px;font-size:11px;line-height:13px;color:#000;letter-spacing:-0.374px;">Polyline (2)</span>
<span id="tr6" class="t " style="left:113.9px;top:204.7px;font-size:11px;line-height:13px;color:#000;letter-spacing:-0.374px;">Polyline (3)</span>
<span id="tr7" class="t " style="left:76.47px;top:220.7px;font-size:11px;line-height:13px;color:#000;letter-spacing:-0.285px;">Machining</span>
<span id="tr8" class="t " style="left:94.9px;top:236.7px;font-size:11px;line-height:13px;color:#000;letter-spacing:-0.489px;">Part1</span>
<span id="tr9" class="t " style="left:114.47px;top:252.7px;font-size:11px;line-height:13px;color:#000;letter-spacing:-0.148px;">Pocket1</span>
<span id="tr10" class="t " style="left:114.47px;top:268.7px;font-size:11px;line-height:13px;color:#fff;letter-spacing:-0.048px;">Pocket2</span>
<div style="left:8px;top:322px;width:251px;height:28px;background:#f0f0f0"></div>
<div style="left:9px;top:325px;width:249px;height:25px;border-radius:0 3px 3px 0;background:linear-gradient(180deg,#fdfdfd 0,#f7f6f6 50%,#efeded 100%)"></div>
<div style="left:13px;top:327px;width:23px;height:22px;background:#cfe6f8;border:1px solid #58a6ea"></div>
<svg style="left:16px;top:330px" width="17" height="16" viewBox="0 0 17 16"><g fill="#fff" stroke="#6c7c8c" stroke-width=".9"><rect x=".5" y=".5" width="6" height="6" rx="1"/><rect x=".5" y="8.5" width="6" height="6" rx="1"/></g><path d="M2 3.5H5M3.5 2V5M2 11.5H5M3.5 10V13" stroke="#000" stroke-width="1"/><path d="M8.5 2H12.5M8.5 10H12.5" stroke="#4a4a3a" stroke-width="1"/><path d="M8.5 4H15M8.5 6H15M8.5 12H15M8.5 14H15M13.5 2H15.5M13.5 10H15.5" stroke="#8aa0c0" stroke-width="1" stroke-dasharray="2 1"/></svg>
<span class="t" style="left:45px;top:328px;font:bold 9px/9px 'Liberation Serif',serif;color:#3858b8">A</span>
<span class="t" style="left:45px;top:337px;font:bold 9px/9px 'Liberation Serif',serif;color:#983048">Z</span>
<svg style="left:54px;top:329px" width="8" height="17" viewBox="0 0 8 17"><path d="M3.5 .5V13" stroke="#000" stroke-width="1.2"/><path d="M1 11.5H6L3.5 15.5Z" fill="#000"/></svg>
<span id="adv" class="t " style="left:74.35px;top:331.2px;font-size:12px;line-height:14px;color:#08081c;letter-spacing:-0.167px;">Advanced</span>
<div style="left:136px;top:329px;width:1px;height:17px;background:#bdbdbd"></div><div style="left:137px;top:329px;width:1px;height:17px;background:#fff"></div>
<svg style="left:148px;top:330px" width="16" height="16" viewBox="0 0 16 16"><rect x="1.6" y="1.6" width="13.6" height="13.6" fill="#00007c"/><rect width="14" height="14" fill="#10c4d0"/></svg>
<span class="t" style="left:151.5px;top:330.5px;font:bold 12px/13px 'Liberation Sans',sans-serif;color:#fff;text-shadow:1px 0 #000,-1px 0 #000,0 1px #000,0 -1px #000">?</span>
<div style="left:8px;top:350px;width:251px;height:212px;background:#d7e4f2"></div>
<div style="left:8px;top:562px;width:251px;height:176px;background:#fff"></div>
<svg style="left:10.0px;top:355.0px" width="9" height="9" viewBox="0 0 9 9"><rect x=".5" y=".5" width="8" height="8" fill="#fff" stroke="#7c8a98"/><path d="M2 4.5H7" stroke="#000"/></svg>
<span id="pc0" class="t " style="left:23.16px;top:353.2px;font-size:11px;line-height:13px;color:#707070;letter-spacing:0.288px;">(General)</span>
<div style="left:22px;top:369px;width:115.3px;height:16.5px;background:#fff"></div>
<div style="left:138.2px;top:369px;width:120.8px;height:16.5px;background:#fff"></div>
<span id="pl0" class="t " style="left:24.04px;top:371.6px;font-size:11px;line-height:13px;color:#000;letter-spacing:-0.134px;">Name</span>
<span id="pv0" class="t " style="left:139.9px;top:371.6px;font-size:11px;line-height:13px;color:#000;">Pocket2</span>
<div style="left:22px;top:386.5px;width:115.3px;height:16.5px;background:#fff"></div>
<div style="left:138.2px;top:386.5px;width:120.8px;height:16.5px;background:#fff"></div>
<span id="pl1" class="t " style="left:24.22px;top:388.6px;font-size:11px;line-height:13px;color:#000;letter-spacing:-0.221px;">Style</span>
<svg style="left:10.0px;top:408.0px" width="9" height="9" viewBox="0 0 9 9"><rect x=".5" y=".5" width="8" height="8" fill="#fff" stroke="#7c8a98"/><path d="M2 4.5H7" stroke="#000"/></svg>
<span id="pc1" class="t " style="left:23.92px;top:406.2px;font-size:11px;line-height:13px;color:#707070;letter-spacing:0.073px;">Cutting Depth</span>
<div style="left:22px;top:422px;width:115.3px;height:16.5px;background:#fff"></div>
<div style="left:138.2px;top:422px;width:120.8px;height:16.5px;background:#fff"></div>
<span id="pl2" class="t " style="left:24.04px;top:424.6px;font-size:11px;line-height:13px;color:#000;letter-spacing:-0.045px;">Depth Increment</span>
<svg style="left:120.5px;top:422.5px" width="15" height="15" viewBox="0 0 15 15"><circle cx="7.5" cy="7.5" r="6.2" fill="#fff" stroke="#48b028" stroke-width="1.7"/><path d="M3.6 7.5H8.4M7 4.2L10.8 7.5L7 10.8Z" fill="#48b028" stroke="#48b028" stroke-width="1.5" stroke-linejoin="round"/></svg>
<span id="pv2" class="t " style="left:140.67px;top:424.6px;font-size:11px;line-height:13px;color:#000;">0.5</span>
<div style="left:22px;top:439.5px;width:115.3px;height:16.5px;background:#fff"></div>
<div style="left:138.2px;top:439.5px;width:120.8px;height:16.5px;background:#fff"></div>
<span id="pl3" class="t " style="left:24.53px;top:441.6px;font-size:11px;line-height:13px;color:#000;letter-spacing:0.061px;">Target Depth</span>
<svg style="left:120.5px;top:439.5px" width="15" height="15" viewBox="0 0 15 15"><circle cx="7.5" cy="7.5" r="6.2" fill="#fff" stroke="#48b028" stroke-width="1.7"/><path d="M3.6 7.5H8.4M7 4.2L10.8 7.5L7 10.8Z" fill="#48b028" stroke="#48b028" stroke-width="1.5" stroke-linejoin="round"/></svg>
<span id="pv3" class="t " style="left:140.23px;top:441.6px;font-size:11px;line-height:13px;color:#000;">-2</span>
<svg style="left:10.0px;top:461.0px" width="9" height="9" viewBox="0 0 9 9"><rect x=".5" y=".5" width="8" height="8" fill="#fff" stroke="#7c8a98"/><path d="M2 4.5H7" stroke="#000"/></svg>
<span id="pc2" class="t " style="left:23.4px;top:459.2px;font-size:11px;line-height:13px;color:#707070;letter-spacing:0.047px;">Feedrates</span>
<div style="left:22px;top:475px;width:115.3px;height:16.5px;background:#fff"></div>
<div style="left:138.2px;top:475px;width:120.8px;height:16.5px;background:#fff"></div>
<span id="pl4" class="t " style="left:24.44px;top:477.6px;font-size:11px;line-height:13px;color:#000;letter-spacing:0.008px;">Cut Feedrate</span>
<svg style="left:120.5px;top:475.5px" width="15" height="15" viewBox="0 0 15 15"><circle cx="7.5" cy="7.5" r="6.2" fill="#fff" stroke="#b4b4b4" stroke-width="1.7"/><path d="M11.4 7.5H6.6M8 4.2L4.2 7.5L8 10.8Z" fill="#b4b4b4" stroke="#b4b4b4" stroke-width="1.5" stroke-linejoin="round"/></svg>
<span id="pv4" class="t " style="left:140.0px;top:477.6px;font-size:11px;line-height:13px;color:#8c8c8c;font-style:italic;">800</span>
<div style="left:22px;top:492.5px;width:115.3px;height:16.5px;background:#fff"></div>
<div style="left:138.2px;top:492.5px;width:120.8px;height:16.5px;background:#fff"></div>
<span id="pl5" class="t " style="left:24.04px;top:494.6px;font-size:11px;line-height:13px;color:#000;letter-spacing:-0.015px;">Plunge Feedrate</span>
<svg style="left:120.5px;top:492.5px" width="15" height="15" viewBox="0 0 15 15"><circle cx="7.5" cy="7.5" r="6.2" fill="#fff" stroke="#b4b4b4" stroke-width="1.7"/><path d="M11.4 7.5H6.6M8 4.2L4.2 7.5L8 10.8Z" fill="#b4b4b4" stroke="#b4b4b4" stroke-width="1.5" stroke-linejoin="round"/></svg>
<span id="pv5" class="t " style="left:139.92px;top:494.6px;font-size:11px;line-height:13px;color:#8c8c8c;font-style:italic;">300</span>
<svg style="left:10.0px;top:514.0px" width="9" height="9" viewBox="0 0 9 9"><rect x=".5" y=".5" width="8" height="8" fill="#fff" stroke="#7c8a98"/><path d="M2 4.5H7" stroke="#000"/></svg>
<span id="pc3" class="t " style="left:23.92px;top:512.2px;font-size:11px;line-height:13px;color:#707070;letter-spacing:0.606px;">Tool</span>
<div style="left:22px;top:528px;width:115.3px;height:16.5px;background:#fff"></div>
<div style="left:138.2px;top:528px;width:120.8px;height:16.5px;background:#fff"></div>
<span id="pl6" class="t " style="left:24.53px;top:530.6px;font-size:11px;line-height:13px;color:#000;letter-spacing:0.113px;">Tool Diameter</span>
<svg style="left:120.5px;top:528.5px" width="15" height="15" viewBox="0 0 15 15"><circle cx="7.5" cy="7.5" r="6.2" fill="#fff" stroke="#48b028" stroke-width="1.7"/><path d="M3.6 7.5H8.4M7 4.2L10.8 7.5L7 10.8Z" fill="#48b028" stroke="#48b028" stroke-width="1.5" stroke-linejoin="round"/></svg>
<span id="pv6" class="t " style="left:140.14px;top:530.6px;font-size:11px;line-height:13px;color:#000;">3</span>
<div style="left:22px;top:545.5px;width:115.3px;height:16.5px;background:#fff"></div>
<div style="left:138.2px;top:545.5px;width:120.8px;height:16.5px;background:#fff"></div>
<span id="pl7" class="t " style="left:24.53px;top:547.6px;font-size:11px;line-height:13px;color:#000;letter-spacing:0.080px;">Tool Number</span>
<svg style="left:120.5px;top:545.5px" width="15" height="15" viewBox="0 0 15 15"><circle cx="7.5" cy="7.5" r="6.2" fill="#fff" stroke="#b4b4b4" stroke-width="1.7"/><path d="M11.4 7.5H6.6M8 4.2L4.2 7.5L8 10.8Z" fill="#b4b4b4" stroke="#b4b4b4" stroke-width="1.5" stroke-linejoin="round"/></svg>
<span id="pv7" class="t " style="left:139.92px;top:547.6px;font-size:11px;line-height:13px;color:#8c8c8c;font-style:italic;">0</span>
<svg id="cv" width="754" height="593" viewBox="0 0 754 593" style="position:absolute;left:262px;top:79px;background:#32323c">
<g fill="none" stroke-linecap="butt" stroke-linejoin="miter">
<path d="M355.2 384.3L361.9 376M368.7 368L375.6 360.3L383.1 352.3L389.8 345.4M397.1 338.1L418.9 317.4M422.9 313.2L426.8 309L431.5 303.2L435.2 297.8L436.8 295.1M438.2 292.3L440.3 287.2L441.6 282.6L442.3 278.3L442.6 273.3L442.4 268.8L441.7 263.7L440.6 259.2L439.1 254.9L437.2 250.7L435 246.7L432 242.3L428.6 238.2L425.3 235L421.3 231.7L417.6 229.3L413.7 227.2L409.7 225.6L406.1 224.5L402.5 223.7L398.8 223.3L395.1 223.2L391.4 223.4L387.7 223.9L384.1 224.7L381.2 225.7L378.4 226.8L376.2 227.9L373.5 229.5L371.5 230.9L368.6 233.2L365.9 235.9L363.9 238.4L361.7 241.5L360.3 243.1L359.1 244L357.7 244.6L356.7 244.9L355.2 245L353.7 244.9L352.7 244.6L351.8 244.2L350.5 243.4L349 241.9L346.9 238.9L344.9 236.4L343.2 234.5L341.3 232.8L338.9 230.9L336.3 229.1L333.7 227.6L330.9 226.3L328 225.3L325.1 224.4L322.1 223.8L318.4 223.3L315.3 223.2L311.6 223.3L308.5 223.6L305.5 224.2L302.5 225L299.6 226L297.3 226.9L294.5 228.3L292.3 229.6L289.6 231.4L287 233.3L284.6 235.5L282.3 237.8L280.1 240.2L278 242.8L276.1 245.5L274.4 248.4L272.9 251.3L271.5 254.3L270.6 256.8L269.2 261.8L268.6 264.3L268.2 267.5L267.9 270.1L267.8 273.3L267.9 275.8L268.2 279L269.1 283.8L269.7 286.1L270.7 289L273 294L274.5 296.7M294.7 320.5L307.9 332.9M323.7 348.5L331.3 356.5M343.6 370.3L349.4 377.2L355.2 384.3M367.6 360.1L374.1 353L380.8 345.9M394 332.7L414.1 313.5M418.1 309.5L421.3 306L425.9 300.5L429.4 295.6L432.3 290.7L434.2 286.3L435.4 282.3L436.1 278.7L436.5 274.4L436.4 270.5L435.9 266L435 262L433.9 258.2L432.3 254.5L430.4 250.9L427.8 246.9L425.3 243.7L422.1 240.3L419.1 237.7L415.4 235.1L411.6 232.9L408.2 231.5L405.1 230.5L402 229.8L398.9 229.4L395.7 229.3L392.5 229.4L389.4 229.8L386.3 230.5L383.3 231.4L380.4 232.6L378.1 233.8L375.5 235.5L373.5 237.1L371.5 238.8L369.7 240.8L365.6 246.3L364.4 247.6L362.9 248.7L361.4 249.6L359.7 250.3L357 251L355.2 251.1L353.4 251L350.7 250.3L349 249.6L347.5 248.7L346 247.6L344.8 246.3L341 241.2L339.6 239.6L337.7 237.7L335.7 236.1L333.6 234.6L331.4 233.3L329 232.2L326.6 231.2L324.1 230.5L321.5 229.9L318.4 229.4L315.2 229.3L312.6 229.3L309.9 229.6L307.3 230L304.8 230.7L302.2 231.5L297.8 233.4L295.5 234.8L293.1 236.3L289.2 239.5L287.1 241.5L285.1 243.7L283.3 246L281.5 248.4L280 250.9L278.6 253.4L276.5 258.2L275.1 263.2L274.2 268.2L273.9 273.3L274.2 278.2L275.1 282.8L276.6 287.3L278.6 291.7L281.6 296.6M298.9 316.1L318.6 334.8M326 342.2L333.3 349.7M366.6 352.1L372.7 345.5L379 339M390.8 327.2L409.3 309.7M416.4 302.4L420.4 297.7L423.7 293.2L426.2 289.2L428.2 285L429.3 281.7L430 278.3L430.4 274.7L430.3 271.3L430 267.4L429.3 264.1L428.3 260.8L427 257.5L425.4 254.4L423.5 251.3L421.4 248.4L418.6 245.4L416 243.1L412.9 240.7L410.1 239L406.9 237.5L404.4 236.6L401.8 236L399.2 235.6L396.1 235.3L393.5 235.4L390.4 235.8L387.9 236.3L385 237.3L382.7 238.3L380.8 239.3L378.7 240.7L377.1 242L374.4 244.7L371.4 248.8L369.4 251.2L368.4 252.1L366.4 253.7L364.1 255.1L361.7 256.1L359.1 256.8L357.8 257L355.2 257.2L352.6 257L350 256.5L347.5 255.6L345.2 254.4L344 253.7L342 252.1L340.1 250.2L339 248.8L336.3 245.1L334 242.5L331 240.2L329.2 239.1L327.4 238.1L325.4 237.3L323 236.5L320.9 235.9L318.7 235.6L316.1 235.4L313.8 235.4L309.4 235.8L307.3 236.3L305.2 236.9L301.5 238.4L299.5 239.5L297.5 240.7L294 243.4L290.4 246.9L287.5 250.5L285 254.4L282.8 258.9L281.4 263.1L280.4 267.9L280 272.8L280.3 277.4L281 281.3L282.4 285.4L284.5 289.7L287 293.6M303.1 311.7L321.2 328.8M331.4 339L337.7 345.5M355.2 355.8L365.7 344.1L376.8 332.6L387.7 321.8L404.6 305.8L411 299.2L414.9 294.8L417.9 291L420.2 287.4L422.1 283.8L423.1 281.1L423.8 278.4L424.2 275.6L424.3 272.8L424.1 269.6L423.6 266.7L422.9 263.9L422 261.2L420.5 258.1L419 255.5L417.2 253L415.2 250.7L413.1 248.6L410.5 246.5L408.2 244.9L405.6 243.6L403.7 242.8L401.3 242.1L398.9 241.6L396.4 241.4L393.9 241.5L391.4 241.8L389.1 242.3L386.9 243.1L385.1 243.9L383.4 244.8L380.6 247L378.8 248.9L376.3 252.4L373.7 255.4L372.5 256.6L369.8 258.8L366.8 260.5L363.7 261.8L362 262.3L358.6 263L355.2 263.3L351.8 263L348.4 262.3L346.7 261.8L343.6 260.5L340.6 258.8L337.9 256.6L336.7 255.4L334.1 252.4L331.6 248.9L330 247.2L327.8 245.4L325.1 243.7L321.6 242.4L318.3 241.7L314.7 241.4L311.2 241.7L307.7 242.5L304.8 243.6L301.5 245.3L298.6 247.5L295.5 250.3L292.9 253.3L290.7 256.6L288.9 260L287.5 263.9L286.5 268L286.1 272L286.2 275.9L286.8 279.5L287.9 282.8L289.6 286.3L292 290.2M307.4 307.3L324.3 323.4M355.2 346.6L364.4 336.6M374.6 326.1L384.1 316.8L399.8 301.9L405.7 296L409.2 292.1L412.1 288.6L414.3 285.3L416 282.5L416.9 280.5L417.5 278.5L418 276.5L418.2 274.1L418.2 271.6L417.9 269.3L417.4 266.7L416.7 264.4L415.6 261.9L414.4 259.7L413 257.6L411.5 255.6L409.8 253.8L407.7 252L405.9 250.6L403.8 249.5L402.1 248.7L400.1 248.1L398.1 247.7L396.2 247.5L394.3 247.6L392.2 247.8L390.5 248.2L388.7 248.9L386.5 250.1L384.6 251.6L383.2 253.1L381.2 256.1L379.9 257.7L378.1 259.7L374.9 262.5L373.2 263.8L369.6 265.9L365.6 267.6L363.6 268.2L359.4 269.1L355.2 269.3L351 269.1L346.8 268.2L344.8 267.6L340.8 265.9L337.2 263.8L333.8 261.1L332.3 259.7L330.5 257.7L326.6 252.4L324.7 250.6L323 249.5L321.1 248.6L318.9 248L316.9 247.6L313.7 247.5L310.5 248L307.6 249L304.8 250.5L301.9 252.6L299.2 255.3L296.9 258.2L294.9 261.6L293.6 264.8L292.6 268.3L292.2 271.9L292.3 275.3L292.8 278.3L293.8 281L295.3 284L297.5 287.5M345.5 336.1L355.2 346.6M363.7 328.5L372.6 319.6L381 311.4L395.1 298L400.5 292.7L403.6 289.4L406.1 286.3L408.4 283.3M410 280.7L410.9 279.1L411.5 277.5L411.9 276.1L412.1 274.5L412.1 272.7L412 270.7L411.7 268.9L411.1 267L410.5 265.3L409.6 263.6L408.6 261.9L407.4 260.2L406.1 258.7L404.7 257.4L403.1 256.1L401.6 255.2L399.2 254.1L397.8 253.8L396.3 253.6L394.9 253.6L393.5 253.8L392.2 254.1L391 254.5L389.6 255.3L388.5 256.3L384.5 261.6L382.5 263.9L380.6 265.7L378.7 267.3L376.6 268.8L374.5 270.2L372.3 271.4L370 272.4L367.6 273.3L365.2 274.1L362.7 274.7L360.2 275.1L357.7 275.3L355.2 275.4L352.7 275.3L350.2 275.1L347.7 274.7L345.2 274.1L342.8 273.3L340.4 272.4L338.1 271.4L335.9 270.2L333.8 268.8L331.7 267.3L329.8 265.7L327.9 263.9L326.2 262L324.4 259.7L322.3 256.7L321.3 255.7L319.6 254.6L317.4 253.9L315.1 253.6L312.8 253.8L310.6 254.3L308.6 255.3L306.5 256.7L304.3 258.7L302.5 260.9L300.9 263.3L299.6 266L298.8 268.7L298.3 271.7L298.3 274.5L298.7 276.7L299.4 278.9L300.9 281.5L302.7 284.3M362.7 320.9L370.5 313.1L389.9 294.6L394.9 289.7L400.3 283.9L402.4 281.3L403.9 279.1L405.3 276.7L405.9 274.8L406 272.3L405.6 269.7L404.7 267.2L403.2 264.7L401.3 262.5L399.2 260.8L397.8 260.1L396.3 259.7L394.5 259.8L393.2 260.2L390.9 263.3L388.8 266L386.8 268.2L384.7 270.2L382.4 272.1L380.1 273.8L377.6 275.4L375 276.8L372.4 278L369.6 279.1L366.8 280L364 280.6L361.1 281.1L358.1 281.4L355.2 281.5L352.3 281.4L349.3 281.1L346.4 280.6L343.6 280L340.8 279.1L338 278L335.4 276.8L332.8 275.4L330.3 273.8L328 272.1L325.7 270.2L323.6 268.2L321.2 265.6L319.5 263.3L317.5 260.4L316.5 259.9L315.4 259.7L314 259.7L312.8 260L311.7 260.5L310.4 261.4L309.1 262.5L307.9 263.9L306.7 265.4L305.6 267.6L304.8 269.6L304.4 271.8L304.4 274.1L304.7 275.5L305.4 277.2L306.7 279.3L308.3 281.6M310.5 273.7L311.6 275.8L313.5 278.4L315.9 281.3M355.2 319.8L367.9 307L386.2 289.7L391.7 284.2L395.1 280.6L397.7 277.4L399.6 274.5L399.9 273.7L400 273L399.7 271.3L399 269.5L397.8 267.7L396.3 266.2L393.4 269.9L391.2 272.4L388.8 274.7L386.2 276.9L383.5 278.8L380.7 280.6L377.8 282.2L374.7 283.6L371.6 284.8L368.4 285.8L365.2 286.6L361.9 287.1L358.5 287.5L355.2 287.6L351.9 287.5L348.5 287.1L345.2 286.6L342 285.8L338.8 284.8L335.7 283.6L332.6 282.2L329.7 280.6L326.9 278.8L324.2 276.9L321.6 274.7L319.2 272.4L317 269.9L314.1 266.2L312.5 267.8L311.2 269.9L310.6 271.8L310.5 273.7M355.2 311.1L366 300.4M378.6 288.5L373.6 290.6L370 291.7L366.4 292.6L362.7 293.2L358.9 293.6L355.2 293.7L351.5 293.6L347.7 293.2L344 292.6L340.4 291.7L336.8 290.6L331.8 288.5L344.4 300.4L355.2 311.1" stroke="#1c8a26" stroke-width="1.2"/>
<path d="M361.9 376L368.7 368M389.8 345.4L397.1 338.1M418.9 317.4L422.9 313.2M436.8 295.1L438.2 292.3M274.5 296.7L276.2 299.4L278.5 302.7L281.4 306.4L284.6 310.1L288.5 314.3L294.7 320.5M307.9 332.9L315.4 340.2L323.7 348.5M331.3 356.5L337.8 363.6L343.6 370.3M355.2 374.6L361.2 367.5L367.6 360.1M380.8 345.9L394 332.7M414.1 313.5L418.1 309.5M281.6 296.6L283.7 299.6L286.5 303L289.5 306.5L293.3 310.5L298.9 316.1M318.6 334.8L326 342.2M333.3 349.7L344.3 361.8L355.2 374.6M355.2 365.1L366.6 352.1M379 339L390.8 327.2M409.3 309.7L416.4 302.4M287 293.6L288.9 296.4L291.2 299.1L296.3 304.8L303.1 311.7M321.2 328.8L331.4 339M337.7 345.5L343.8 352.1L355.2 365.1M292 290.2L295.8 295.2L301.1 301.1L307.4 307.3M324.3 323.4L333.6 332.5L344.7 344.1L355.2 355.8M364.4 336.6L374.6 326.1M297.5 287.5L301.2 292.1L306.4 297.8L312.1 303.4L327.5 317.9L335.2 325.6L345.5 336.1M355.2 337.5L363.7 328.5M408.4 283.3L410 280.7M302.7 284.3L306.5 289L311.2 294L315.8 298.5L329.4 311.4L337.8 319.6L346.7 328.5L355.2 337.5M355.2 328.6L362.7 320.9M308.3 281.6L311.7 285.7L316.3 290.5L339.9 313L347.7 320.8L355.2 328.6M315.9 281.3L319 284.6L324.7 290.2L342.5 307L355.2 319.8M366 300.4L378.6 288.5" stroke="#2450a0" stroke-width="1.2"/>
<path d="M355.29999999999995 0V593" stroke="#1a8420" stroke-width="1.5"/>
<path d="M0 304H754" stroke="#ee1c26" stroke-width="1.4"/>
<path d="M355.2 237.4L352.6 233.7L350.1 230.8L347.4 228.1L344 225.2L341 223.1L337.1 220.9L333.8 219.3L329.7 217.8L326.2 216.9L321.9 216.1L317.6 215.6L313.2 215.6L308.9 215.9L304.6 216.6L300.3 217.7L296.9 218.9L293.5 220.3L289.6 222.4L285.8 224.7L282.2 227.4L278.9 230.4L275.7 233.6L272.8 237.1L270.2 240.8L267.8 244.6L265.7 248.7L263.9 252.8L262.7 256.4L261.8 260L260.9 264.5L260.4 268.9L260.2 273.3L260.5 278.5L261.1 282.8L262.1 287L263.4 291L265 294.9L267.2 299.4L269.9 303.6L273.2 308.4L277.9 314.1L284 320.6L289.4 325.9L302.6 338.4L310.1 345.6L318.3 353.8L325.8 361.7L333.6 370.3L340.7 378.6L347.3 386.6L355.2 396.6L363.1 386.6L369.7 378.6L376.8 370.3L384.6 361.7L392.1 353.8L400.3 345.6L407.8 338.4L421 325.9L426.4 320.6L432.5 314.1L437.2 308.4L440.5 303.6L443.2 299.4L445.4 294.9L447 291L448.3 287L449.3 282.8L449.9 278.5L450.2 273.3L450 268.9L449.5 264.5L448.6 260L447.7 256.4L446.5 252.8L444.7 248.7L442.6 244.6L440.2 240.8L437.6 237.1L434.7 233.6L431.5 230.4L428.2 227.4L424.6 224.7L420.8 222.4L416.9 220.3L413.5 218.9L410.1 217.7L405.8 216.6L401.5 215.9L397.2 215.6L392.8 215.6L388.5 216.1L384.2 216.9L380.7 217.8L376.6 219.3L373.3 220.9L369.4 223.1L366.4 225.2L363 228.1L360.3 230.8L357.8 233.7L355.2 237.4Z" stroke="#a81cb0" stroke-width="2" stroke-linejoin="round"/>
<path d="M272.5 95.1L199.8 70.1M131.9 137.3L151.6 196.5M148.1 205.6L100.8 232M96.8 322.5L141.8 353.2M144.8 361.6L126.3 426.3M195 491.3L222.4 481.8M232.1 486.7L243.4 522.8M328.9 547.4L358.6 522M368.7 522.2L390.2 541.7M476.1 520.3L486.6 491.3M494.1 486.3L555.9 489.2M603.2 407.1L591.4 388.7M595.5 377.3L619.7 370M635.2 275.7L603.1 252.7M601.8 241.6L619.3 221.3M581.4 133.3L532.8 131M525.6 123.4L525.6 110.6M442.3 66.5L412.3 87M401.6 84.9L389.1 65.7M300.8 64.3L281.3 92.3M480 110.4L479.8 174.2L579.4 178.9M584.8 191.5L529.2 255.9L608.7 312.8M606.5 326.3L514.8 354.1L564.9 431.9M558.1 443.6L457 438.9L433.2 504.8M420.9 507.9L364.6 456.9L299.2 512.8M287 509.3L259.3 420.7L180 448.2M170.2 438.9L199.2 337.2L122.5 284.8M123 271.9L208.8 223.9L175.2 122.8M184.9 113.2L295.7 151.3L338.3 90.4M350.9 90.6L393.1 155.3L468.1 104.1M270.6 100.9L197.9 75.9M137.7 135.4L157.4 194.6M151.1 210.9L103.8 237.3M100.2 317.5L145.2 348.2M150.6 363.3L132.2 428M193 485.5L220.4 476.1M237.9 484.9L249.2 521M325 542.8L354.7 517.4M372.8 517.6L394.3 537.1M470.4 518.2L480.8 489.2M494.4 480.2L556.2 483.1M598.1 410.4L586.2 392M593.8 371.5L617.8 364.1M631.6 280.6L599.6 257.7M597.2 237.6L614.6 217.4M581.1 139.4L532.6 137.1M519.5 123.4L519.6 110.6M445.7 71.5L415.7 92M396.5 88.2L384 69.1M305.8 67.8L286.2 95.8M486.1 110.4L485.9 168.4L579.6 172.8M589.4 195.4L538.2 254.8L612.2 307.9M608.2 332.1L524.3 357.6L570 428.6M557.9 449.7L461.2 445.1L438.9 506.9M416.8 512.4L364.5 465L303.1 517.4M281.2 511.1L255.4 428.5L182 453.9M164.3 437.2L192.1 339.7L119 289.8M120.1 266.6L201.4 221.1L169.4 124.7M186.9 107.5L293.3 144.1L333.3 86.9M356 87.3L394.8 146.8L464.7 99.1M268.6 106.6L195.9 81.6M143.5 133.5L163.2 192.7M154 216.2L106.9 242.6M103.7 312.5L148.6 343.2M156.5 364.9L138.1 429.6M191.1 479.8L218.4 470.3M243.8 483.1L255 519.1M321.1 538.1L350.7 512.8M376.9 513.1L398.3 532.6M464.7 516.1L475.1 487.2M494.6 474.1L556.4 477M592.9 413.6L581.1 395.3M592 365.6L616 358.3M628 285.5L596.1 262.6M592.6 233.6L610 213.4M580.8 145.5L532.3 143.2M513.4 123.4L513.5 110.7M449.1 76.6L419.1 97M391.4 91.5L379 72.4M310.8 71.4L291.2 99.3M492.2 110.5L492 162.6L579.9 166.7M594 199.4L547.1 253.8L615.8 302.9M610 337.9L533.8 361.1L575.1 425.3M557.6 455.8L465.4 451.4L444.6 509M412.7 516.9L364.4 473.1L307.1 522M275.4 512.9L251.5 436.3L184 459.7M158.5 435.6L185.1 342.3L115.6 294.8M117.1 261.2L194.1 218.2L163.6 126.6M188.8 101.7L290.9 136.9L328.3 83.4M361.1 83.9L396.5 138.3L461.2 94.1M266.6 112.4L194 87.4M149.3 131.6L168.9 190.8M157 221.5L109.9 247.9M107.2 307.5L152.1 338.1M162.3 366.6L143.9 431.2M189.1 474L216.4 464.6M249.6 481.3L260.8 517.2M317.1 533.5L346.8 508.1M380.9 508.6L402.4 528M459 513.9L469.4 485.1M494.9 468L556.7 470.9M587.8 416.9L576 398.6M590.2 359.8L614.2 352.5M624.4 290.4L592.5 267.6M588 229.7L605.4 209.5M580.4 151.5L532 149.3M507.3 123.4L507.4 110.7M452.5 81.6L422.6 102.1M386.3 94.8L373.9 75.8M315.7 74.9L296.2 102.8M498.3 110.5L498.1 156.8L580.2 160.7M598.6 203.4L556.1 252.7L619.3 298M611.8 343.7L543.3 364.5L580.2 422M557.3 461.8L469.6 457.7L450.3 511M408.6 521.4L364.3 481.2L311 526.7M269.6 514.7L247.5 444.1L186 465.4M152.6 433.9L178 344.8L112.2 299.9M114.1 255.9L186.7 215.4L157.9 128.6M190.8 96L288.6 129.6L323.3 79.9M366.2 80.6L398.2 129.8L457.8 89M169 354.3L171 347.4L165 343.3M170.4 217.5L179.4 212.5L176.1 202.7M278.5 119.7L286.2 122.4L290.9 115.6M391.2 107.9L399.9 121.2L413.1 112.2M504.3 137L504.2 151L518.3 151.7M576.8 238L565 251.6L579.7 262.1M576.3 360.9L552.7 368L566.1 388.8M481.5 464.4L473.8 464L471.2 471.3M372.9 497.2L364.1 489.3L355.1 497M248.4 467.4L243.6 451.9L228.3 457.2" stroke="#1e54d8" stroke-width="1.5"/>
<path d="M281.3 92.3A7.6 7.6 0 0 1 272.5 95.1M199.8 70.1A53.2 53.2 0 0 0 131.9 137.3M151.6 196.5A7.6 7.6 0 0 1 148.1 205.6M100.8 232A53.2 53.2 0 0 0 96.8 322.5M141.8 353.2A7.6 7.6 0 0 1 144.8 361.6M126.3 426.3A53.2 53.2 0 0 0 195 491.3M222.4 481.8A7.6 7.6 0 0 1 232.1 486.7M243.4 522.8A53.2 53.2 0 0 0 328.9 547.4M358.6 522A7.6 7.6 0 0 1 368.7 522.2M390.2 541.7A53.2 53.2 0 0 0 476.1 520.3M486.6 491.3A7.6 7.6 0 0 1 494.1 486.3M555.9 489.2A53.2 53.2 0 0 0 603.2 407.1M591.4 388.7A7.6 7.6 0 0 1 595.5 377.3M619.7 370A53.2 53.2 0 0 0 635.2 275.7M603.1 252.7A7.6 7.6 0 0 1 601.8 241.6M619.3 221.3A53.2 53.2 0 0 0 581.4 133.3M532.8 131A7.6 7.6 0 0 1 525.6 123.4M525.6 110.6A53.2 53.2 0 0 0 442.3 66.5M412.3 87A7.6 7.6 0 0 1 401.6 84.9M389.1 65.7A53.2 53.2 0 0 0 300.8 64.3M468.1 104.1A7.6 7.6 0 0 1 480 110.4M579.4 178.9A7.6 7.6 0 0 1 584.8 191.5M608.7 312.8A7.6 7.6 0 0 1 606.5 326.3M564.9 431.9A7.6 7.6 0 0 1 558.1 443.6M433.2 504.8A7.6 7.6 0 0 1 420.9 507.9M299.2 512.8A7.6 7.6 0 0 1 287 509.3M180 448.2A7.6 7.6 0 0 1 170.2 438.9M122.5 284.8A7.6 7.6 0 0 1 123 271.9M175.2 122.8A7.6 7.6 0 0 1 184.9 113.2M338.3 90.4A7.6 7.6 0 0 1 350.9 90.6M286.2 95.8A13.7 13.7 0 0 1 270.6 100.9M197.9 75.9A47.2 47.2 0 0 0 137.7 135.4M157.4 194.6A13.7 13.7 0 0 1 151.1 210.9M103.8 237.3A47.2 47.2 0 0 0 100.2 317.5M145.2 348.2A13.7 13.7 0 0 1 150.6 363.3M132.2 428A47.2 47.2 0 0 0 193 485.5M220.4 476.1A13.7 13.7 0 0 1 237.9 484.9M249.2 521A47.2 47.2 0 0 0 325 542.8M354.7 517.4A13.7 13.7 0 0 1 372.8 517.6M394.3 537.1A47.2 47.2 0 0 0 470.4 518.2M480.8 489.2A13.7 13.7 0 0 1 494.4 480.2M556.2 483.1A47.2 47.2 0 0 0 598.1 410.4M586.2 392A13.7 13.7 0 0 1 593.8 371.5M617.8 364.1A47.2 47.2 0 0 0 631.6 280.6M599.6 257.7A13.7 13.7 0 0 1 597.2 237.6M614.6 217.4A47.2 47.2 0 0 0 581.1 139.4M532.6 137.1A13.7 13.7 0 0 1 519.5 123.4M519.6 110.6A47.2 47.2 0 0 0 445.7 71.5M415.7 92A13.7 13.7 0 0 1 396.5 88.2M384 69.1A47.2 47.2 0 0 0 305.8 67.8M464.7 99.1A13.7 13.7 0 0 1 486.1 110.4M579.6 172.8A13.7 13.7 0 0 1 589.4 195.4M612.2 307.9A13.7 13.7 0 0 1 608.2 332.1M570 428.6A13.7 13.7 0 0 1 557.9 449.7M438.9 506.9A13.7 13.7 0 0 1 416.8 512.4M303.1 517.4A13.7 13.7 0 0 1 281.2 511.1M182 453.9A13.7 13.7 0 0 1 164.3 437.2M119 289.8A13.7 13.7 0 0 1 120.1 266.6M169.4 124.7A13.7 13.7 0 0 1 186.9 107.5M333.3 86.9A13.7 13.7 0 0 1 356 87.3M291.2 99.3A19.8 19.8 0 0 1 268.6 106.6M195.9 81.6A41.1 41.1 0 0 0 143.5 133.5M163.2 192.7A19.8 19.8 0 0 1 154 216.2M106.9 242.6A41.1 41.1 0 0 0 103.7 312.5M148.6 343.2A19.8 19.8 0 0 1 156.5 364.9M138.1 429.6A41.1 41.1 0 0 0 191.1 479.8M218.4 470.3A19.8 19.8 0 0 1 243.8 483.1M255 519.1A41.1 41.1 0 0 0 321.1 538.1M350.7 512.8A19.8 19.8 0 0 1 376.9 513.1M398.3 532.6A41.1 41.1 0 0 0 464.7 516.1M475.1 487.2A19.8 19.8 0 0 1 494.6 474.1M556.4 477A41.1 41.1 0 0 0 592.9 413.6M581.1 395.3A19.8 19.8 0 0 1 592 365.6M616 358.3A41.1 41.1 0 0 0 628 285.5M596.1 262.6A19.8 19.8 0 0 1 592.6 233.6M610 213.4A41.1 41.1 0 0 0 580.8 145.5M532.3 143.2A19.8 19.8 0 0 1 513.4 123.4M513.5 110.7A41.1 41.1 0 0 0 449.1 76.6M419.1 97A19.8 19.8 0 0 1 391.4 91.5M379 72.4A41.1 41.1 0 0 0 310.8 71.4M461.2 94.1A19.8 19.8 0 0 1 492.2 110.5M579.9 166.7A19.8 19.8 0 0 1 594 199.4M615.8 302.9A19.8 19.8 0 0 1 610 337.9M575.1 425.3A19.8 19.8 0 0 1 557.6 455.8M444.6 509A19.8 19.8 0 0 1 412.7 516.9M307.1 522A19.8 19.8 0 0 1 275.4 512.9M184 459.7A19.8 19.8 0 0 1 158.5 435.6M115.6 294.8A19.8 19.8 0 0 1 117.1 261.2M163.6 126.6A19.8 19.8 0 0 1 188.8 101.7M328.3 83.4A19.8 19.8 0 0 1 361.1 83.9M296.2 102.8A25.9 25.9 0 0 1 266.6 112.4M194 87.4A35 35 0 0 0 149.3 131.6M168.9 190.8A25.9 25.9 0 0 1 157 221.5M109.9 247.9A35 35 0 0 0 107.2 307.5M152.1 338.1A25.9 25.9 0 0 1 162.3 366.6M143.9 431.2A35 35 0 0 0 189.1 474M216.4 464.6A25.9 25.9 0 0 1 249.6 481.3M260.8 517.2A35 35 0 0 0 317.1 533.5M346.8 508.1A25.9 25.9 0 0 1 380.9 508.6M402.4 528A35 35 0 0 0 459 513.9M469.4 485.1A25.9 25.9 0 0 1 494.9 468M556.7 470.9A35 35 0 0 0 587.8 416.9M576 398.6A25.9 25.9 0 0 1 590.2 359.8M614.2 352.5A35 35 0 0 0 624.4 290.4M592.5 267.6A25.9 25.9 0 0 1 588 229.7M605.4 209.5A35 35 0 0 0 580.4 151.5M532 149.3A25.9 25.9 0 0 1 507.3 123.4M507.4 110.7A35 35 0 0 0 452.5 81.6M422.6 102.1A25.9 25.9 0 0 1 386.3 94.8M373.9 75.8A35 35 0 0 0 315.7 74.9M457.8 89A25.9 25.9 0 0 1 498.3 110.5M580.2 160.7A25.9 25.9 0 0 1 598.6 203.4M619.3 298A25.9 25.9 0 0 1 611.8 343.7M580.2 422A25.9 25.9 0 0 1 557.3 461.8M450.3 511A25.9 25.9 0 0 1 408.6 521.4M311 526.7A25.9 25.9 0 0 1 269.6 514.7M186 465.4A25.9 25.9 0 0 1 152.6 433.9M112.2 299.9A25.9 25.9 0 0 1 114.1 255.9M157.9 128.6A25.9 25.9 0 0 1 190.8 96M323.3 79.9A25.9 25.9 0 0 1 366.2 80.6M165 343.3A31.9 31.9 0 0 1 169 354.3M176.1 202.7A31.9 31.9 0 0 1 170.4 217.5M290.9 115.6A31.9 31.9 0 0 1 278.5 119.7M413.1 112.2A31.9 31.9 0 0 1 391.2 107.9M518.3 151.7A31.9 31.9 0 0 1 504.3 137M579.7 262.1A31.9 31.9 0 0 1 576.8 238M566.1 388.8A31.9 31.9 0 0 1 576.3 360.9M471.2 471.3A31.9 31.9 0 0 1 481.5 464.4M355.1 497A31.9 31.9 0 0 1 372.9 497.2M228.3 457.2A31.9 31.9 0 0 1 248.4 467.4" stroke="#18d418" stroke-width="1.5"/>
<path d="M344.5 94.8L391 166L472.4 110.4L472.2 181.5L579 186.5L518 257.2L604.2 319L503 349.8L558.5 436L451.8 431L426 502.2L364.8 446.8L294.2 507L264.2 411L177.5 441L208 334L126.8 278.5L218 227.5L182.4 120.4L298.6 160.4Z" stroke="#ff1010" stroke-width="2.25" stroke-linejoin="round"/>
<path d="M294.6 59.9L275 87.9L202.2 62.9M124.7 139.6L144.4 198.9L97.1 225.4M92.4 328.7L137.5 359.5L119 424.3M197.4 498.5L224.9 489L236.2 525.1M333.8 553.3L363.6 527.8L385.1 547.3M483.2 522.9L493.7 493.9L555.7 496.8M609.7 403.1L597.7 384.6L621.9 377.2M639.7 269.5L607.6 246.5L625.1 226.2M581.8 125.7L533.2 123.4L533.2 110.6M438.1 60.2L408 80.7L395.4 61.5M202.2 62.9A60.8 60.8 0 0 0 124.7 139.6M97.1 225.4A60.8 60.8 0 0 0 92.4 328.7M119 424.3A60.8 60.8 0 0 0 197.4 498.5M236.2 525.1A60.8 60.8 0 0 0 333.8 553.3M385.1 547.3A60.8 60.8 0 0 0 483.2 522.9M555.7 496.8A60.8 60.8 0 0 0 609.7 403.1M621.9 377.2A60.8 60.8 0 0 0 639.7 269.5M625.1 226.2A60.8 60.8 0 0 0 581.8 125.7M533.2 110.6A60.8 60.8 0 0 0 438.1 60.2M395.4 61.5A60.8 60.8 0 0 0 294.6 59.9" stroke="#ff1010" stroke-width="2.25" stroke-linecap="round"/>
</g>
<path d="M297.6 115.8L391.2 107.9M298.1 117.4L413.1 112.2M413.1 112.2L504.3 137M413.1 112.2L518.3 151.7M518.3 151.7L576.8 238M518.3 151.7L579.7 262.1M579.7 262.1L576.3 360.9M579.7 262.1L566.1 388.8M168 222L165 343.3M170 222L169 354.3M169 354.3L248.4 467.4M169 354.3L228.3 457.2M248.4 467.4L372.9 497.2M248.4 467.4L355.1 497M372.9 497.2L481.5 464.4M372.9 497.2L471.2 471.3M481.5 464.4L576.3 360.9M481.5 464.4L566.1 388.8" fill="none" stroke="#ee421c" stroke-width="1.3" stroke-dasharray="1.8 1.2"/>
<path d="M391.2 107.9A31.9 31.9 0 0 0 413.1 112.2M504.3 137A31.9 31.9 0 0 0 518.3 151.7M576.8 238A31.9 31.9 0 0 0 579.7 262.1M576.3 360.9A31.9 31.9 0 0 0 566.1 388.8M481.5 464.4A31.9 31.9 0 0 0 471.2 471.3M372.9 497.2A31.9 31.9 0 0 0 355.1 497M248.4 467.4A31.9 31.9 0 0 0 228.3 457.2M169 354.3A31.9 31.9 0 0 0 165 343.3" fill="none" stroke="#f08a1c" stroke-width="1.5" stroke-dasharray="1.8 1.2"/>
<path d="M278.5 95L289.6 113.6L294 114.6L314 128.6M149 205L170.7 218.2L175 220L186 239M353.8 247L353.8 302" fill="none" stroke="#ee421c" stroke-width="1.6" stroke-dasharray="1.6 1.2"/>
<path d="M391.2 107.9L385.9 104.6M391.2 107.9L394.5 102.5M413.1 112.2L419.3 111.2M413.1 112.2L412.1 106M504.3 137L501.6 131.3M504.3 137L510 134.3M518.3 151.7L523.8 154.6M518.3 151.7L521.2 146.1M576.8 238L578.5 231.9M576.8 238L582.9 239.7M579.7 262.1L582.8 267.6M579.7 262.1L585.2 259.1M576.3 360.9L581 356.6M576.3 360.9L580.6 365.5M566.1 388.8L566.9 395M566.1 388.8L572.3 387.9M481.5 464.4L487.3 462M481.5 464.4L483.9 470.2M471.2 471.3L466.7 475.7M471.2 471.3L475.6 475.7M372.9 497.2L378.9 499.1M372.9 497.2L371.1 503.3M355.1 497L349.1 498.6M355.1 497L356.8 503.1M248.4 467.4L252.7 472M248.4 467.4L243.8 471.7M228.3 457.2L222 456.6M228.3 457.2L227.6 463.5M169 354.3L170 360.6M169 354.3L162.8 355.4M165 343.3L161.8 337.9M165 343.3L159.6 346.5" fill="none" stroke="#f4e81c" stroke-width="1.5" stroke-linecap="round"/>
<path d="M276.7 95.8L280.9 101.4M276 100.7L281.6 96.5M279.6 101L283.9 106.6M278.9 105.9L284.6 101.7M283.2 106.2L287.4 111.8M282.5 111.1L288.1 106.9M287.5 110.6L291.7 116.2M286.8 115.5L292.4 111.3M293.9 112.8L298.1 118.4M293.2 117.7L298.8 113.5M298.1 116.1L302.3 121.7M297.4 121L303 116.8M302.8 119.2L307 124.8M302.1 124.1L307.7 119.9M306.9 122.1L311.1 127.7M306.2 127L311.8 122.8M310.3 124.8L314.5 130.4M309.6 129.7L315.2 125.5M148.1 204.9L152.4 210.6M147.4 209.9L153.1 205.6M152.3 208.7L156.5 214.3M151.6 213.6L157.2 209.4M156.9 212.4L161.1 218.1M156.2 217.4L161.8 213.1M161.9 215.6L166.1 221.2M161.2 220.5L166.8 216.3M171.9 217.8L176.1 223.4M171.2 222.7L176.8 218.5M175.2 221L179.4 226.6M174.5 225.9L180.1 221.7M177.7 225.4L181.9 231M177 230.3L182.6 226.1M180.5 229.8L184.7 235.4M179.8 234.7L185.4 230.5M182.5 233.8L186.7 239.4M181.8 238.7L187.4 234.5M349 247.4L353.8 252.1M349 252.1L353.8 247.4M349 253.4L353.8 258.1M349 258.1L353.8 253.4M349 259.4L353.8 264.1M349 264.1L353.8 259.4M349 265.4L353.8 270.1M349 270.1L353.8 265.4M349 271.4L353.8 276.1M349 276.1L353.8 271.4M349 277.4L353.8 282.1M349 282.1L353.8 277.4M349 283.4L353.8 288.1M349 288.1L353.8 283.4M349 289.4L353.8 294.1M349 294.1L353.8 289.4M349 295.4L353.8 300.1M349 300.1L353.8 295.4M272.8 93.2L277 93.6L279.5 96.2M313.5 128.6L318.6 128.2M143.2 204L148 204L150 206.2M184.8 237.8L188.8 241.6M350.3 240.9L354.3 244.8L354.6 247.5M353.6 300.6L352.6 302.6L348.8 305.6" fill="none" stroke="#f4e81c" stroke-width="1.35" stroke-linecap="round" stroke-linejoin="round"/>
<path transform="translate(533 382) scale(.96)" d="M0.5 0.5V16.5L4.3 12.9L7 19.2L9.6 18.1L6.9 11.9H12Z" fill="#fff" stroke="#111" stroke-width="1" stroke-linejoin="miter"/>
</svg>
<div style="left:259px;top:79px;width:3px;height:662px;background:linear-gradient(90deg,#b4b4b4 0,#9c9c9c 100%)"></div>
<div style="left:259px;top:672px;width:757px;height:3px;background:#a4a4a4"></div>
<div style="left:262px;top:675px;width:754px;height:65px;background:#fff"></div>
<div style="left:262px;top:688px;width:754px;height:13px;background:#3399ff"></div>
<span id="log1" class="t " style="left:264.19px;top:676px;font-size:11px;line-height:13px;color:#000;letter-spacing:-0.099px;">Toolpath distance 'Pocket2' : 12921.3723235652 + rapids : 930.077871113566 = total : 13851.4501946788</span>
<span id="log2" class="t " style="left:264.19px;top:689px;font-size:11px;line-height:13px;color:#fff;letter-spacing:-0.129px;">Estimated Toolpath 'Pocket2' duration : 00:16:09 + rapids : 00:01:33 = total : 00:17:42</span>
<div style="left:8px;top:740px;width:1008px;height:20px;background:#f0f0f0"></div>
<div style="left:8px;top:742px;width:641px;height:17px;border-top:1px solid #a0a0a0;border-left:1px solid #a0a0a0;border-right:1px solid #fff;border-bottom:1px solid #fff"></div>
<div style="left:652px;top:742px;width:197px;height:17px;border-top:1px solid #a0a0a0;border-left:1px solid #a0a0a0;border-right:1px solid #fff;border-bottom:1px solid #fff"></div>
<div style="left:852px;top:742px;width:148px;height:17px;border-top:1px solid #a0a0a0;border-left:1px solid #a0a0a0;border-right:1px solid #fff;border-bottom:1px solid #fff"></div>
<span id="st1" class="t " style="left:654.9px;top:744.4px;font-size:11px;line-height:13px;color:#000;letter-spacing:-0.480px;">Paste format</span>
<span id="st2" class="t " style="left:910.31px;top:744.4px;font-size:11px;line-height:13px;color:#000;letter-spacing:-0.120px;">35.0000, -15.0000</span>
<svg style="left:1003px;top:746px" width="13" height="13" viewBox="0 0 13 13"><path d="M12 1L1 12M12 5L5 12M12 9L9 12" stroke="#a0a0a0" stroke-width="1.2"/><path d="M13 1L2 12M13 5L6 12M13 9L10 12" stroke="#fff" stroke-width="1"/></svg>
</div></body></html>
